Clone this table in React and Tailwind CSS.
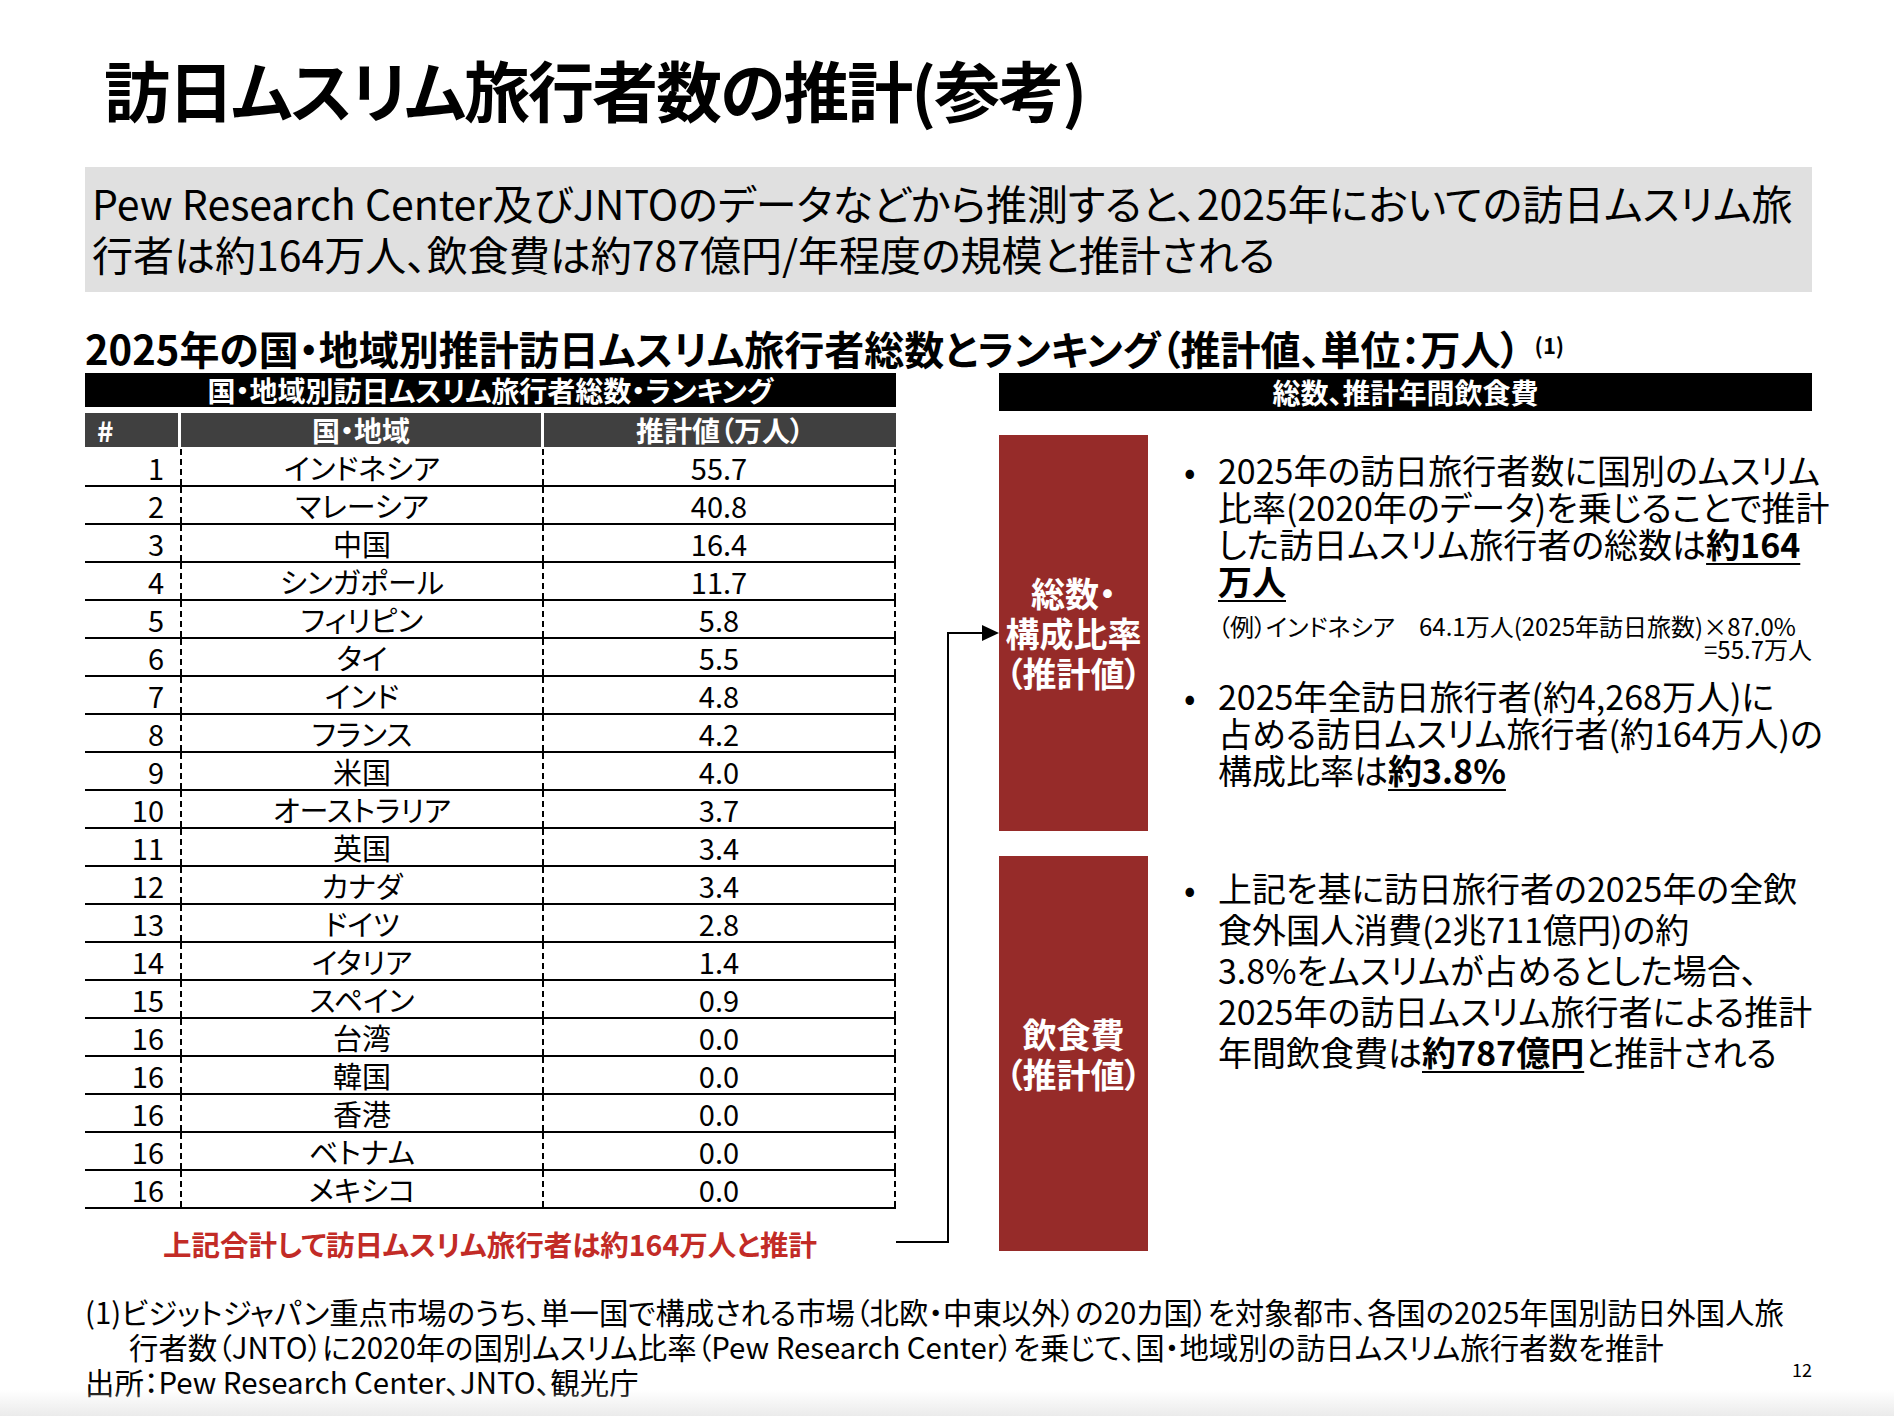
import React from "react";

const rows = [
  ["1", "インドネシア", "55.7"],
  ["2", "マレーシア", "40.8"],
  ["3", "中国", "16.4"],
  ["4", "シンガポール", "11.7"],
  ["5", "フィリピン", "5.8"],
  ["6", "タイ", "5.5"],
  ["7", "インド", "4.8"],
  ["8", "フランス", "4.2"],
  ["9", "米国", "4.0"],
  ["10", "オーストラリア", "3.7"],
  ["11", "英国", "3.4"],
  ["12", "カナダ", "3.4"],
  ["13", "ドイツ", "2.8"],
  ["14", "イタリア", "1.4"],
  ["15", "スペイン", "0.9"],
  ["16", "台湾", "0.0"],
  ["16", "韓国", "0.0"],
  ["16", "香港", "0.0"],
  ["16", "ベトナム", "0.0"],
  ["16", "メキシコ", "0.0"],
];

const Bullet = ({ children, className = "" }) => (
  <div className={`flex ${className}`}>
    <div className="w-[38px] shrink-0 pl-[4px]">•</div>
    <div className="whitespace-nowrap">{children}</div>
  </div>
);

const Strong = ({ children }) => (
  <span className="font-bold underline decoration-2 underline-offset-[5px]">{children}</span>
);

const RankTable = () => (
  <div className="w-[811px]">
    <div className="h-[34px] bg-black text-white font-bold text-[28px] leading-[34px] text-center">
      国・地域別訪日ムスリム旅行者総数・ランキング
    </div>
    <div className="mt-[6px] flex gap-[3px] h-[34px] text-white font-bold text-[28px] leading-[34px]">
      <div className="w-[93px] bg-[#404040] pl-[12px]">#</div>
      <div className="w-[360px] bg-[#404040] text-center">国・地域</div>
      <div className="w-[352px] bg-[#404040] text-center">推計値（万人）</div>
    </div>
    <div className="mt-[2px]">
      {rows.map((r, i) => (
        <div key={i} className="flex h-[38px] border-b-2 border-black text-[29px] leading-[36px] text-black">
          <div className="w-[95px] text-right pr-[16px]">{r[0]}</div>
          <div className="w-[362px] text-center border-l-2 border-dashed border-black">{r[1]}</div>
          <div className="w-[354px] text-center border-l-2 border-r-2 border-dashed border-black">{r[2]}</div>
        </div>
      ))}
    </div>
    <div className="mt-[15px] pl-[78px] text-[28.5px] leading-[40px] font-bold text-[#c22b26] whitespace-nowrap">
      上記合計して訪日ムスリム旅行者は約164万人と推計
    </div>
  </div>
);

const RightPanel = () => (
  <div className="w-[813px]">
    <div className="h-[38px] bg-black text-white font-bold text-[28px] leading-[38px] text-center">
      総数、推計年間飲食費
    </div>
    <div className="mt-[24px] flex h-[396px]">
      <div className="w-[149px] shrink-0 bg-[#962b29] text-white font-bold text-[34px] leading-[40px] flex flex-col items-center justify-center text-center">
        <div>総数・</div>
        <div>構成比率</div>
        <div>（推計値）</div>
      </div>
      <div className="w-[664px] pl-[32px] pt-[16px] text-[34px] text-black">
        <Bullet className="leading-[37px]">
          2025年の訪日旅行者数に国別のムスリム
          <br />
          比率(2020年のデータ)を乗じることで推計
          <br />
          した訪日ムスリム旅行者の総数は<Strong>約164</Strong>
          <br />
          <Strong>万人</Strong>
        </Bullet>
        <div className="mt-[15px] ml-[38px] text-[24px] leading-[23px] whitespace-nowrap">
          <div>（例）インドネシア　64.1万人(2025年訪日旅数)×87.0%</div>
          <div className="text-right">=55.7万人</div>
        </div>
        <Bullet className="mt-[17px] leading-[37px]">
          2025年全訪日旅行者(約4,268万人)に
          <br />
          占める訪日ムスリム旅行者(約164万人)の
          <br />
          構成比率は<Strong>約3.8%</Strong>
        </Bullet>
      </div>
    </div>
    <div className="mt-[25px] flex h-[395px]">
      <div className="w-[149px] shrink-0 bg-[#962b29] text-white font-bold text-[34px] leading-[40px] flex flex-col items-center justify-center text-center">
        <div>飲食費</div>
        <div>（推計値）</div>
      </div>
      <div className="w-[664px] pl-[32px] pt-[11px] text-[34px] leading-[41px] text-black">
        <Bullet>
          上記を基に訪日旅行者の2025年の全飲
          <br />
          食外国人消費(2兆711億円)の約
          <br />
          3.8%をムスリムが占めるとした場合、
          <br />
          2025年の訪日ムスリム旅行者による推計
          <br />
          年間飲食費は<Strong>約787億円</Strong>と推計される
        </Bullet>
      </div>
    </div>
  </div>
);

export default function App() {
  return (
    <div className="relative w-[1894px] h-[1416px] bg-white overflow-hidden text-black font-['Noto_Sans_CJK_JP','Noto_Sans',sans-serif] [font-feature-settings:'palt']">
      <h1 className="pt-[48px] pl-[104px] text-[66px] leading-[80px] font-bold tracking-[-0.03em] whitespace-nowrap">
        訪日ムスリム旅行者数の推計(参考)
      </h1>

      <div className="mt-[39px] ml-[85px] w-[1727px] h-[125px] bg-[#e0e0e0] pl-[7px] pt-[10px] text-[41px] leading-[51px] whitespace-nowrap">
        Pew Research Center及びJNTOのデータなどから推測すると、2025年においての訪日ムスリム旅
        <br />
        行者は約164万人、飲食費は約787億円/年程度の規模と推計される
      </div>

      <div className="mt-[34px] ml-[85px] flex items-center h-[44px] whitespace-nowrap">
        <span className="text-[40px] leading-[44px] font-bold">
          2025年の国・地域別推計訪日ムスリム旅行者総数とランキング（推計値、単位：万人）
        </span>
        <span className="ml-[14px] text-[22px] font-bold relative -top-[4px]">(1)</span>
      </div>

      <div className="mt-[3px] ml-[85px] flex gap-[103px]">
        <RankTable />
        <RightPanel />
      </div>

      <svg className="absolute left-[896px] top-[620px]" width="103" height="630" viewBox="0 0 103 630">
        <polyline points="0,622 52,622 52,13 88,13" fill="none" stroke="black" strokeWidth="2" />
        <polygon points="86,5 103,13 86,21" fill="black" />
      </svg>

      <div className="mt-[30px] ml-[85px] w-[1727px] flex justify-between text-[29.4px] leading-[35px] whitespace-nowrap">
        <div>
          <div>(1)ビジットジャパン重点市場のうち、単一国で構成される市場（北欧・中東以外）の20カ国）を対象都市、各国の2025年国別訪日外国人旅</div>
          <div className="pl-[44px]">行者数（JNTO）に2020年の国別ムスリム比率（Pew Research Center）を乗じて、国・地域別の訪日ムスリム旅行者数を推計</div>
          <div>出所：Pew Research Center、JNTO、観光庁</div>
        </div>
        <div className="pt-[64px] text-[18px] leading-[22px]">12</div>
      </div>

      <div className="absolute bottom-0 left-0 w-full h-[26px] bg-gradient-to-b from-white/0 to-[#ebebeb]" />
    </div>
  );
}
